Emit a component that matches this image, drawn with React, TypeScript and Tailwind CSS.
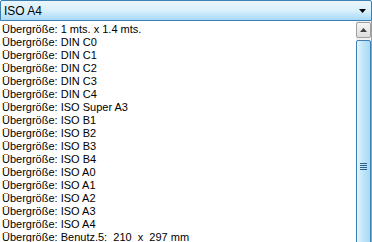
const items = [
  "Übergröße: 1 mts. x 1.4 mts.",
  "Übergröße: DIN C0",
  "Übergröße: DIN C1",
  "Übergröße: DIN C2",
  "Übergröße: DIN C3",
  "Übergröße: DIN C4",
  "Übergröße: ISO Super A3",
  "Übergröße: ISO B1",
  "Übergröße: ISO B2",
  "Übergröße: ISO B3",
  "Übergröße: ISO B4",
  "Übergröße: ISO A0",
  "Übergröße: ISO A1",
  "Übergröße: ISO A2",
  "Übergröße: ISO A3",
  "Übergröße: ISO A4",
  "Übergröße: Benutz.5:  210  x  297 mm",
];

function ScrollBar() {
  return (
    <div className="flex w-[15px] shrink-0 flex-col gap-[2px] overflow-hidden bg-[#f0f0f0] pt-[1px]">
      {/* up button */}
      <div className="flex h-[16px] shrink-0 items-center justify-center rounded-[2px] border border-[#a0a0a0] bg-gradient-to-b from-[#f6f6f6] to-[#dcdcdc]">
        <svg width="7" height="4" viewBox="0 0 7 4">
          <path d="M3.5 0 L7 4 L0 4 Z" fill="#404040" />
        </svg>
      </div>
      {/* thumb, runs past the bottom edge */}
      <div className="flex h-[252px] shrink-0 items-center justify-center rounded-t-[2px] border border-[#3c7fb1] bg-gradient-to-r from-[#e3f4fc] via-[#bfe4f8] to-[#a9d9f5]">
        <div className="flex flex-col gap-[1px]">
          <div className="h-[1px] w-[7px] bg-[#2c628b]" />
          <div className="h-[1px] w-[7px] bg-[#2c628b]" />
          <div className="h-[1px] w-[7px] bg-[#2c628b]" />
          <div className="h-[1px] w-[7px] bg-[#2c628b]" />
        </div>
      </div>
    </div>
  );
}

export default function App() {
  return (
    <div
      className="flex h-[242px] w-[372px] flex-col overflow-hidden bg-white text-[11px] text-black"
      style={{ fontFamily: "Tahoma, 'Liberation Sans', sans-serif" }}
    >
      {/* combo box */}
      <div className="flex h-[21px] shrink-0 items-center justify-between rounded-t-[2px] border border-[#3c7fb1] bg-gradient-to-b from-[#eaf6fd] via-[#d9f0fc] to-[#a7d9f5] pl-[3px] pr-[5px] text-[12px]">
        <span className="leading-none">ISO A4</span>
        <svg width="7" height="4" viewBox="0 0 7 4">
          <path d="M0 0 L7 0 L3.5 4 Z" fill="#000" />
        </svg>
      </div>

      {/* dropdown list */}
      <div className="flex min-h-0 flex-1 border-r border-[#a0a0a0]">
        <div className="min-w-0 flex-1 overflow-hidden pl-[2px] pt-[2px]">
          {items.map((t) => (
            <div key={t} className="h-[13px] whitespace-pre leading-[13px]">
              {t}
            </div>
          ))}
        </div>
        <ScrollBar />
      </div>
    </div>
  );
}
